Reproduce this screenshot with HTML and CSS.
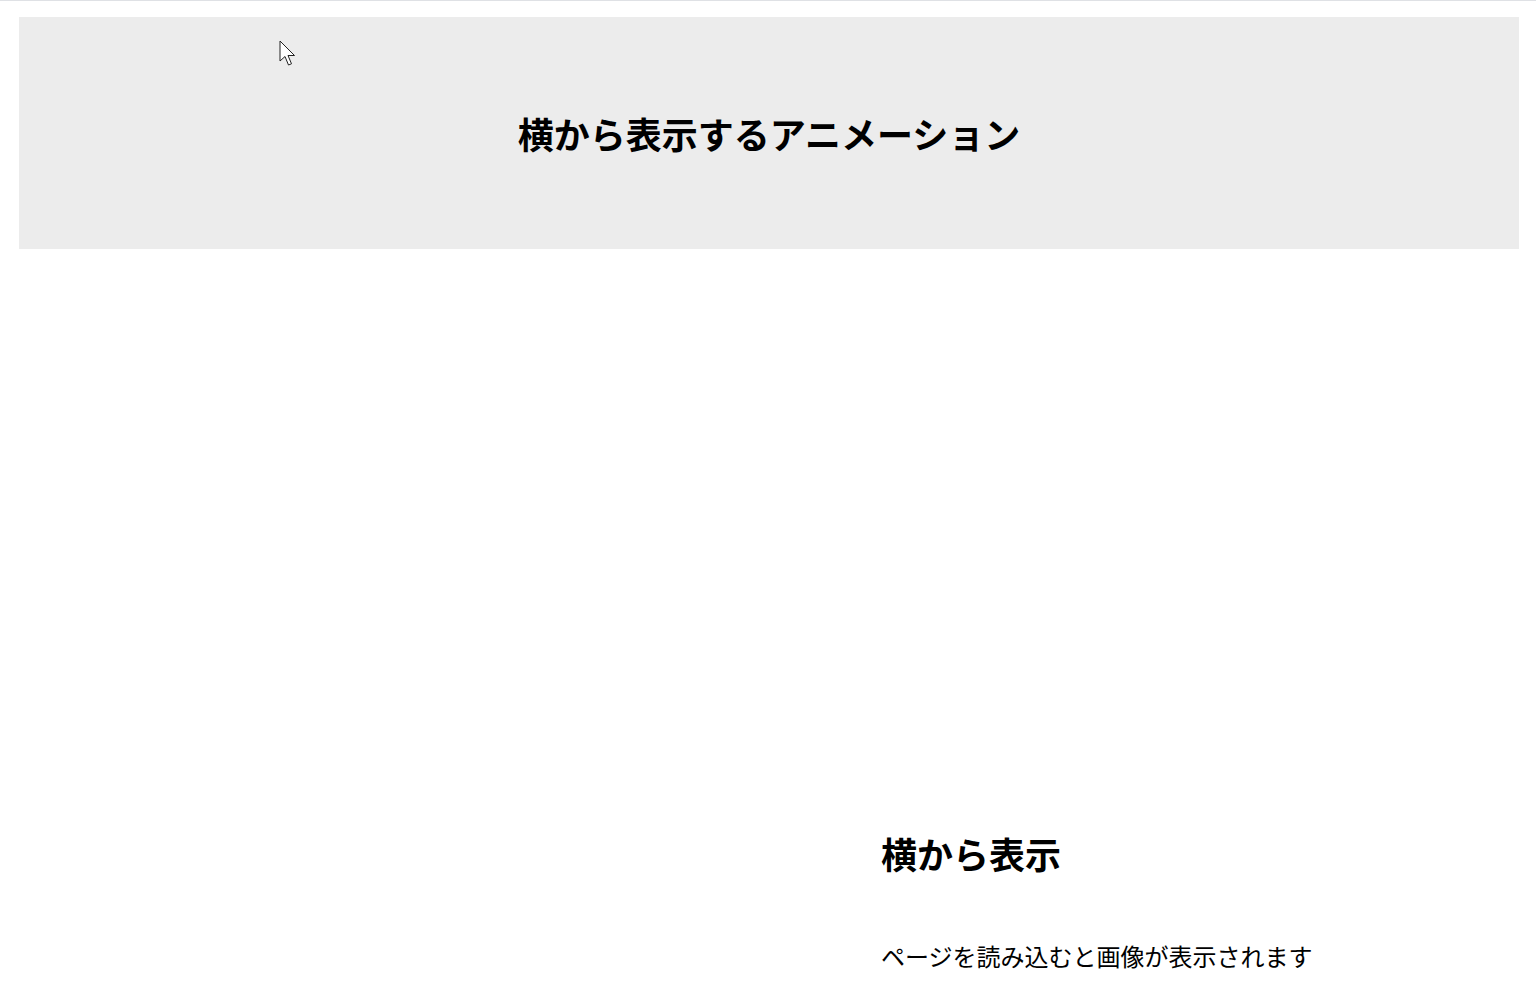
FILE: index.html
```html
<!DOCTYPE html>
<html lang="ja">
  <head>
    <meta charset="UTF-8" />
    <title>横から表示するアニメーション</title>
    <meta name="viewport" content="width=device-width, initial-scale=1.0" />
    <link rel="stylesheet" href="styles.css">
  </head>
  <body>
    <header class="page-header">
      <h1>横から表示するアニメーション</h1>
    </header>

    <section class="slide-section">
      <div class="slide-image"></div>
      <div class="slide-text">
        <h2>横から表示</h2>
        <p>ページを読み込むと画像が表示されます</p>
      </div>
    </section>

    <svg class="cursor" width="20" height="30" viewBox="0 0 20 30">
      <path d="M1 1 L1 21 L6 16.5 L9.5 25 L12.5 23.8 L9 15.5 L15.5 15.5 Z" fill="#fff" stroke="#222" stroke-width="1" stroke-linejoin="round" />
    </svg>
  </body>
</html>
```

FILE: styles.css
```css
body {
  margin: 0;
  font-family: 'Noto Sans CJK JP', sans-serif;
  color: #000;
  background: #fff;
  border-top: 1px solid #dfe1e5;
}

.page-header {
  width: 1500px;
  height: 232px;
  margin: 16px 0 0 19px;
  background: #ececec;
  display: flex;
  justify-content: center;
  align-items: center;
}

h1 {
  margin: 0;
  font-size: 36px;
  font-weight: bold;
}

.slide-section {
  display: flex;
  margin: 0 0 0 19px;
  width: 1500px;
}

.slide-image {
  width: 862px;
  height: 578px;
}

.slide-text {
  padding-top: 578px;
}

h2 {
  margin: 0;
  font-size: 36px;
  font-weight: bold;
}

p {
  margin: 59px 0 0;
  font-size: 24px;
}

.cursor {
  position: absolute;
  left: 279px;
  top: 40px;
}
```
